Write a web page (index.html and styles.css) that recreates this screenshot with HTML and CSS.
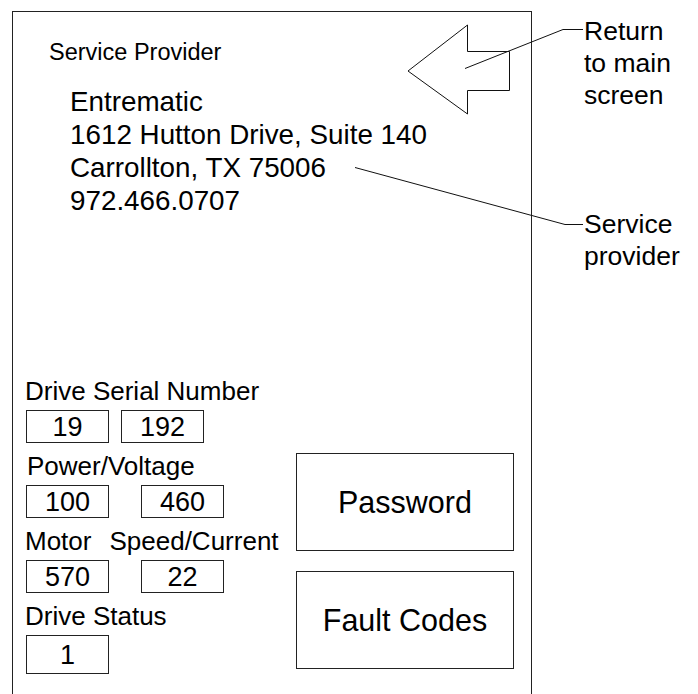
FILE: index.html
```
<!DOCTYPE html>
<html lang="en">
<head>
<meta charset="utf-8">
<title>Service Provider</title>
<link rel="stylesheet" href="styles.css">
</head>
<body>
<div class="page">
  <section class="screen">
    <div class="top">
      <div class="provider">
        <div class="provider-title">Service Provider</div>
        <address class="provider-info">Entrematic<br>1612 Hutton Drive, Suite 140<br>Carrollton, TX 75006<br>972.466.0707</address>
      </div>
      <div class="back" role="button" aria-label="Return to main screen">
        <svg width="104" height="93" viewBox="0 0 104 93">
          <polygon points="1,48 60.5,2 60.5,28.5 102.5,28.5 102.5,67.5 60.5,67.5 60.5,91" fill="#fff" stroke="#111" stroke-width="1"/>
        </svg>
      </div>
    </div>
    <div class="bottom">
      <div class="fields">
        <div class="field">
          <div class="label">Drive Serial Number</div>
          <div class="values values-tight"><div class="val">19</div><div class="val">192</div></div>
        </div>
        <div class="field">
          <div class="label label-indent">Power/Voltage</div>
          <div class="values values-wide"><div class="val">100</div><div class="val">460</div></div>
        </div>
        <div class="field">
          <div class="label">Motor<span class="label-second">Speed/Current</span></div>
          <div class="values values-wide"><div class="val">570</div><div class="val">22</div></div>
        </div>
        <div class="field">
          <div class="label">Drive Status</div>
          <div class="values"><div class="val val-tall">1</div></div>
        </div>
      </div>
      <div class="actions">
        <div class="action">Password</div>
        <div class="action">Fault Codes</div>
      </div>
    </div>
  </section>
  <aside class="callouts">
    <div class="callout">Return<br>to main<br>screen</div>
    <div class="callout callout-provider">Service<br>provider</div>
  </aside>
  <svg class="leaders" width="698" height="694" viewBox="0 0 698 694">
    <polyline points="465,68.5 563,29.5 583,29.5" fill="none" stroke="#111" stroke-width="1"/>
    <polyline points="355,167.5 565,224.5 583,224.5" fill="none" stroke="#111" stroke-width="1"/>
  </svg>
</div>
</body>
</html>
```
FILE: styles.css
```
html, body {
  margin: 0;
  height: 100%;
  overflow: hidden;
  background: #fff;
}
body {
  font-family: "Liberation Sans", Arial, sans-serif;
  color: #000;
}
.page {
  position: relative;
  display: flex;
  align-items: flex-start;
  width: 698px;
  height: 694px;
}
.screen {
  box-sizing: border-box;
  flex: 0 0 520px;
  width: 520px;
  height: 683px;
  margin: 11px 0 0 12px;
  border: 1px solid #222;
  border-bottom: none;
}
.top {
  display: grid;
  grid-template-columns: 1fr;
}
.provider {
  grid-area: 1 / 1;
  padding: 26px 0 0 36px;
  white-space: nowrap;
}
.provider-title {
  font-size: 23.5px;
  line-height: 28px;
}
.provider-info {
  font-style: normal;
  font-size: 27.8px;
  line-height: 33px;
  margin: 19px 0 0 21px;
}
.back {
  grid-area: 1 / 1;
  justify-self: end;
  align-self: start;
  margin: 11px 20px 0 0;
  line-height: 0;
}
.bottom {
  display: flex;
  justify-content: space-between;
  align-items: flex-start;
  margin-top: 155px;
}
.fields {
  display: flex;
  flex-direction: column;
  padding-left: 12px;
}
.field {
  margin-bottom: 4px;
}
.field:last-child {
  margin-bottom: 0;
}
.label {
  font-size: 26px;
  line-height: 38px;
  white-space: nowrap;
}
.label-indent {
  padding-left: 2px;
}
.label-second {
  margin-left: 18px;
}
.values {
  display: flex;
  padding-left: 1px;
}
.values-tight {
  gap: 12px;
}
.values-wide {
  gap: 32px;
}
.val {
  box-sizing: border-box;
  width: 83px;
  height: 33px;
  padding-top: 2px;
  border: 1px solid #222;
  font-size: 27px;
  line-height: 29px;
  text-align: center;
}
.val-tall {
  height: 39px;
  line-height: 35px;
}
.actions {
  display: flex;
  flex-direction: column;
  gap: 20px;
  padding: 81px 17px 0 0;
}
.action {
  box-sizing: border-box;
  width: 218px;
  height: 98px;
  border: 1px solid #222;
  display: flex;
  align-items: center;
  justify-content: center;
  font-size: 30.5px;
}
.callouts {
  margin-left: 52px;
  padding-top: 15px;
}
.callout {
  font-size: 26.5px;
  line-height: 32px;
  white-space: nowrap;
}
.callout-provider {
  margin-top: 97px;
}
.leaders {
  position: absolute;
  left: 0;
  top: 0;
  pointer-events: none;
}
```
